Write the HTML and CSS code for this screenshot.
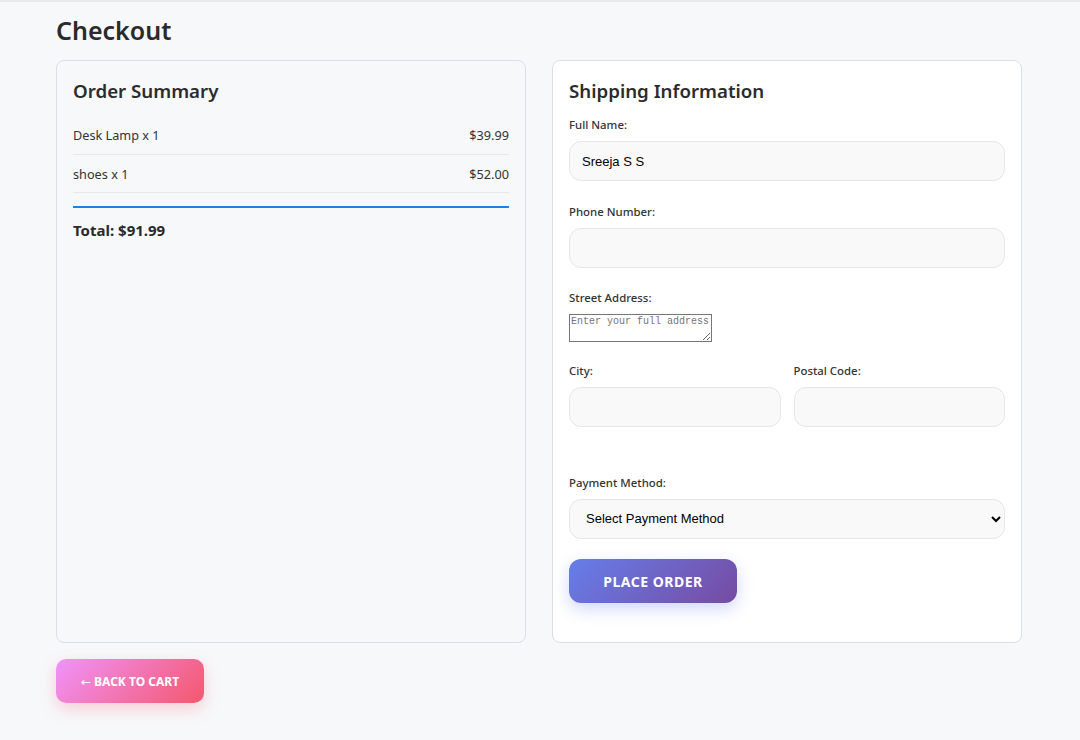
FILE: index.html
```html
<!DOCTYPE html>
<html lang="en">
<head>
<meta charset="utf-8">
<title>Checkout</title>
<link rel="stylesheet" href="styles.css">
</head>
<body>
<div class="topline"></div>
<main class="page">
  <h1 class="page-title">Checkout</h1>
  <div class="columns">
    <section class="card summary">
      <h2 class="card-title">Order Summary</h2>
      <div class="item"><span>Desk Lamp x 1</span><span>$39.99</span></div>
      <div class="item"><span>shoes x 1</span><span>$52.00</span></div>
      <div class="total">Total: $91.99</div>
    </section>
    <section class="card shipping">
      <h2 class="card-title">Shipping Information</h2>
      <div class="group">
        <label class="label">Full Name:</label>
        <input class="field" type="text" value="Sreeja S S">
      </div>
      <div class="group">
        <label class="label">Phone Number:</label>
        <input class="field" type="text">
      </div>
      <div class="group group-address">
        <label class="label">Street Address:</label>
        <textarea class="address" placeholder="Enter your full address"></textarea>
      </div>
      <div class="row">
        <div class="group">
          <label class="label">City:</label>
          <input class="field" type="text">
        </div>
        <div class="group">
          <label class="label">Postal Code:</label>
          <input class="field" type="text">
        </div>
      </div>
      <div class="group">
        <label class="label">Payment Method:</label>
        <select class="field select">
          <option>Select Payment Method</option>
        </select>
      </div>
      <button class="btn-order" type="button">Place Order</button>
    </section>
  </div>
  <button class="btn-back" type="button"><span class="arrow">←</span> Back to Cart</button>
</main>
</body>
</html>
```

FILE: styles.css
```css
* { box-sizing: border-box; }
html, body { margin: 0; padding: 0; }
body {
  background: #f7f8fa;
  font-family: "Noto Sans", "Open Sans", sans-serif;
  color: #333;
}
.topline { height: 2px; background: #e9eaec; }
.page {
  width: 966px;
  margin-left: 56px;
  padding: 10px 0 30px;
}
.page-title {
  margin: 0 0 12px;
  font-size: 25px;
  font-weight: 600;
  line-height: 36px;
  color: #2a2a2a;
}
.columns {
  display: grid;
  grid-template-columns: 1fr 1fr;
  gap: 26px;
}
.card {
  border: 1px solid #dcdfe3;
  border-radius: 8px;
  padding: 16px;
}
.summary { background: #f7f8fa; }
.shipping { background: #fff; padding-bottom: 39px; }
.card-title {
  margin: 0 0 11px;
  font-size: 18.7px;
  font-weight: 600;
  line-height: 28px;
  color: #2c2c2c;
}
.item {
  display: flex;
  justify-content: space-between;
  font-size: 12.7px;
  line-height: 18px;
  padding: 10px 0 9.5px;
  border-bottom: 1px solid #e6e8ea;
}
.total {
  margin-top: 13px;
  border-top: 2px solid #1a82f0;
  padding-top: 12px;
  font-size: 15px;
  font-weight: 700;
  color: #2a2a2a;
}
.group {
  display: flex;
  flex-direction: column;
  margin-bottom: 21.5px;
}
.group-address { margin-bottom: 20px; }
.label {
  font-size: 11.4px;
  font-weight: 500;
  line-height: 17px;
  margin-bottom: 8px;
  color: #333;
}
.field {
  height: 40px;
  width: 100%;
  border: 1px solid #e6e6e6;
  border-radius: 12px;
  background: #f9f9f9;
  padding: 0 12px;
  font-family: "Liberation Sans", Arial, sans-serif;
  font-size: 13px;
  color: #000;
}
.address {
  width: 143px;
  height: 28px;
  font-family: "Liberation Mono", monospace;
  font-size: 10px;
  padding: 1px;
  border: 1px solid #767676;
  border-radius: 0;
  background: #fff;
  overflow: hidden;
}
.row {
  display: grid;
  grid-template-columns: 1fr 1fr;
  gap: 13px;
  margin-bottom: 25px;
}
.btn-order {
  margin-top: -1px;
  width: 168px;
  height: 44px;
  border: none;
  border-radius: 12px;
  background: linear-gradient(135deg, #667eea, #764ba2);
  color: #fff;
  font-family: "Noto Sans", sans-serif;
  font-size: 14px;
  font-weight: 700;
  letter-spacing: 0.5px;
  text-transform: uppercase;
  box-shadow: 0 6px 16px rgba(102, 126, 234, 0.3);
}
.btn-back {
  margin-top: 16px;
  width: 148px;
  height: 44px;
  border: none;
  border-radius: 10px;
  background: linear-gradient(135deg, #f093fb, #f5576c);
  color: #fff;
  font-family: "Noto Sans", sans-serif;
  font-size: 12px;
  font-weight: 700;
  text-transform: uppercase;
  box-shadow: 0 6px 16px rgba(245, 87, 108, 0.25);
}
.arrow {
  font-family: "DejaVu Sans", sans-serif;
  font-weight: 400;
}
```
